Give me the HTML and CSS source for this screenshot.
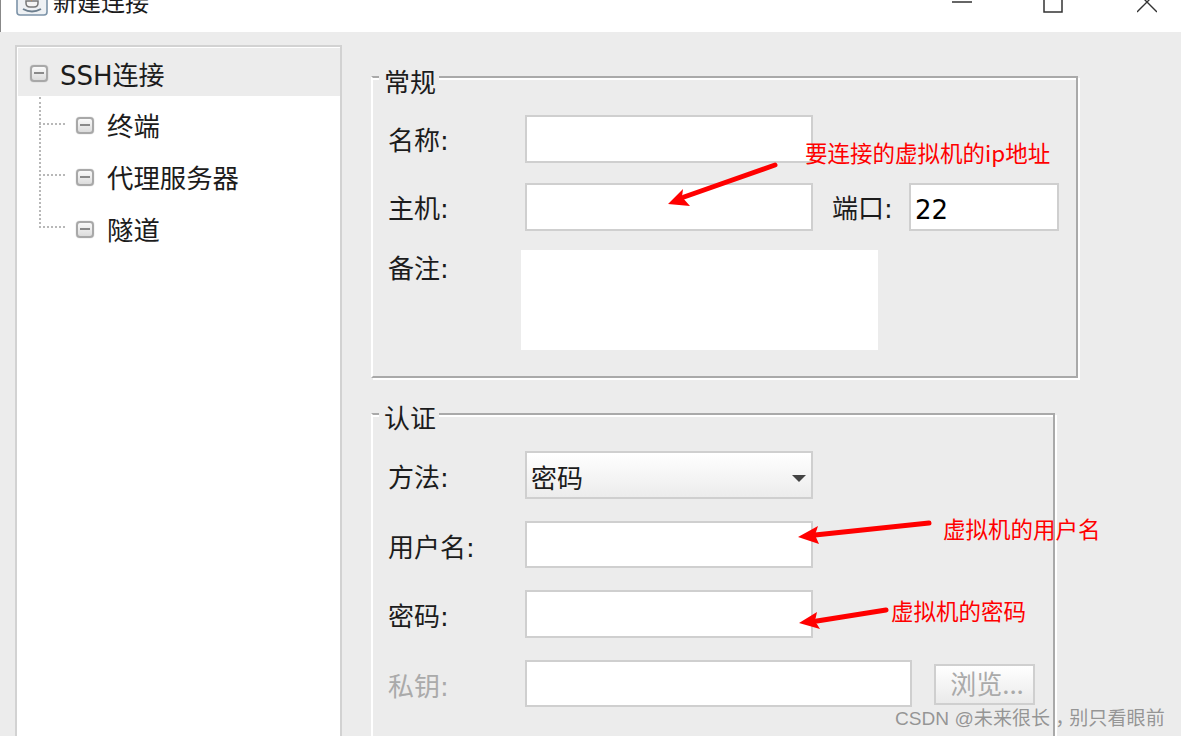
FILE: index.html
```html
<!DOCTYPE html>
<html lang="zh-CN">
<head>
<meta charset="utf-8">
<title>新建连接</title>
<link rel="stylesheet" href="styles.css">
</head>
<body>
<div class="window">
  <header class="titlebar">
    <div class="title-left">
      <svg class="app-icon" width="32" height="18" viewBox="0 0 32 18"><rect x="1" y="-14" width="30" height="29" rx="3" fill="#eef1f4" stroke="#7c93a8" stroke-width="1.6"/><path d="M10 1h12v2q0 4-4 4h-4q-4 0-4-4z" fill="#f4f4f4" stroke="#777" stroke-width="1.5"/><path d="M7 9q9 5 18 0" fill="none" stroke="#6d7f8e" stroke-width="2"/><path d="M15 -3q-2 1.500 1 3" stroke="#d9822b" stroke-width="1.500" fill="none"/></svg>
      <span class="title-text">新建连接</span>
    </div>
    <div class="controls">
      <svg width="20" height="14" viewBox="0 0 20 14"><path d="M0 2h20" stroke="#333" stroke-width="1.5"/></svg>
      <svg width="20" height="14" viewBox="0 0 20 14"><path d="M1 -8v20h18v-20" stroke="#333" stroke-width="1.5" fill="none"/></svg>
      <svg class="control-close" width="20" height="14" viewBox="0 0 20 14"><path d="M0 -8l20 20M20 -8l-20 20" stroke="#333" stroke-width="1.4" fill="none"/></svg>
    </div>
  </header>
  <main class="content">
    <nav class="tree">
      <div class="tree-root"><span class="toggle"></span><span>SSH连接</span></div>
      <ul class="tree-children">
        <li class="tree-item"><span class="connector"></span><span class="toggle"></span><span>终端</span></li>
        <li class="tree-item"><span class="connector"></span><span class="toggle"></span><span>代理服务器</span></li>
        <li class="tree-item"><span class="connector"></span><span class="toggle"></span><span>隧道</span></li>
      </ul>
    </nav>
    <div class="panels">
      <section class="group group-general">
        <div class="legend">常规</div>
        <div class="row row-tight"><label class="label">名称:</label><div class="field field-main"></div></div>
        <div class="row"><label class="label">主机:</label><div class="field field-main"></div><label class="label-port">端口:</label><div class="field field-port">22</div></div>
        <div class="row row-note"><label class="label">备注:</label><div class="note"></div></div>
      </section>
      <section class="group group-auth">
        <div class="legend">认证</div>
        <div class="row"><label class="label">方法:</label><div class="field field-main select">密码<span class="caret"></span></div></div>
        <div class="row"><label class="label">用户名:</label><div class="field field-main"></div></div>
        <div class="row"><label class="label">密码:</label><div class="field field-main"></div></div>
        <div class="row"><label class="label disabled">私钥:</label><div class="field field-key"></div><div class="browse">浏览...</div></div>
      </section>
    </div>
  </main>
  <svg class="arrows" width="1181" height="736" viewBox="0 0 1181 736">
    <path d="M775 165L684 197" stroke="#f00" stroke-width="5" stroke-linecap="round"/>
    <path d="M668 204L683 189L682 197L690 206Z" fill="#f00"/>
    <path d="M929 523L815 535" stroke="#f00" stroke-width="5" stroke-linecap="round"/>
    <path d="M798 537L818 526L815 535L819 544Z" fill="#f00"/>
    <path d="M886 610L817 621" stroke="#f00" stroke-width="5" stroke-linecap="round"/>
    <path d="M799 623L817 612L815 621L820 629Z" fill="#f00"/>
  </svg>
  <span class="note-text note-host">要连接的虚拟机的ip地址</span>
  <span class="note-text note-user">虚拟机的用户名</span>
  <span class="note-text note-pass">虚拟机的密码</span>
  <span class="watermark">CSDN @未来很长<span class="comma">，</span>别只看眼前</span>
</div>
</body>
</html>
```
FILE: styles.css
```css
html, body {
  margin: 0;
  padding: 0;
  height: 100%;
  overflow: hidden;
}
body {
  font-family: "DejaVu Sans", "Noto Sans CJK SC", sans-serif;
  font-size: 26px;
  color: #1c1c1c;
}
.window {
  position: relative;
  width: 1181px;
  height: 736px;
  overflow: hidden;
  background: #ececec;
}
.titlebar {
  height: 32px;
  background: #fff;
  border-left: 1px solid #888;
  display: flex;
  justify-content: space-between;
  align-items: flex-start;
  overflow: hidden;
}
.title-left {
  display: flex;
  align-items: flex-start;
  margin-left: 15px;
}
.title-text {
  font-size: 24px;
  line-height: 30px;
  margin-top: -12px;
  margin-left: 5px;
}
.controls {
  display: flex;
  gap: 71px;
  margin-right: 24px;
}
.control-close {
  margin-left: 3px;
}
.content {
  display: flex;
  align-items: flex-start;
  padding-left: 15px;
  padding-top: 13px;
}
.tree {
  flex: none;
  box-sizing: border-box;
  width: 327px;
  height: 720px;
  background: #fff;
  border: 2px solid #d2d2d2;
  padding: 1px 0 0 1px;
}
.tree-root {
  height: 48px;
  background: #ececec;
  display: flex;
  align-items: center;
  padding-left: 12px;
  padding-top: 2px;
  box-sizing: border-box;
}
.toggle {
  flex: none;
  box-sizing: border-box;
  position: relative;
  width: 18px;
  height: 17px;
  margin-right: 12px;
  border: 2px solid #a8a8a8;
  border-radius: 4px;
  background: linear-gradient(#fafafa, #dcdcdc);
  box-shadow: 0 0 1px #999;
}
.toggle::after {
  content: "";
  position: absolute;
  left: 2px;
  right: 2px;
  top: 5px;
  height: 2px;
  background: #8a8a8a;
}
.tree-children {
  list-style: none;
  margin: 0;
  padding: 4px 0 0 21px;
  position: relative;
  font-size: 26.4px;
}
.tree-children::before {
  content: "";
  position: absolute;
  left: 21px;
  top: 1px;
  bottom: 27px;
  border-left: 2px dotted #b8b8b8;
}
.tree-item {
  height: 51.67px;
  display: flex;
  align-items: center;
}
.tree-item .toggle {
  margin-right: 13px;
}
.tree-item span:last-child {
  position: relative;
  top: -1px;
}
.connector {
  flex: none;
  width: 26px;
  margin: -4px 11px 0 0;
  border-top: 2px dotted #b8b8b8;
}
.panels {
  margin-left: 29px;
  padding-top: 31px;
}
.group {
  box-sizing: border-box;
  border: 2px solid #a9a9a9;
  border-left-color: #fff;
  box-shadow: 2px 2px 0 #fff, inset 0 2px 0 #fff;
  padding-left: 15px;
}
.group-general {
  width: 707px;
  height: 302px;
}
.group-auth {
  width: 684px;
  height: 420px;
  margin-top: 35px;
}
.legend {
  width: fit-content;
  margin: -10px 0 17px -9px;
  padding: 0 3px 0 5px;
  height: 30px;
  line-height: 30px;
  background: #ececec;
}
.group-auth .legend {
  margin-top: -11px;
  margin-bottom: 17px;
}
.row {
  display: flex;
  align-items: center;
  margin-bottom: 22px;
}
.row-tight {
  margin-bottom: 20.5px;
}
.row-note {
  align-items: flex-start;
  margin-top: -2.5px;
}
.label {
  flex: none;
  width: 137px;
  position: relative;
  top: 1px;
}
.group-general .label {
  top: 0;
}
.row-note .label {
  width: 133px;
  top: -2px;
}
.disabled {
  color: #aaa;
}
.field {
  flex: none;
  box-sizing: border-box;
  height: 47.5px;
  background: #fff;
  border: 2px solid #cfcfcf;
  display: flex;
  align-items: center;
  padding: 4px 0 0 4px;
}
.field-main {
  width: 288px;
}
.label-port {
  margin-left: 19px;
  width: 77px;
  flex: none;
}
.field-port {
  width: 150px;
  color: #000;
  padding-top: 6px;
}
.field-key {
  width: 387px;
}
.note {
  flex: none;
  width: 357px;
  height: 100px;
  background: #fff;
}
.select {
  position: relative;
  background: linear-gradient(#fff, #ececec);
}
.caret {
  position: absolute;
  right: 5px;
  top: 22px;
  width: 0;
  height: 0;
  border-left: 7px solid transparent;
  border-right: 7px solid transparent;
  border-top: 7px solid #444;
}
.browse {
  flex: none;
  box-sizing: border-box;
  width: 101px;
  height: 41px;
  margin-left: 22px;
  margin-top: 3px;
  padding: 0 0 4px 5px;
  border: 2px solid #cfcfcf;
  background: linear-gradient(#fff, #eaeaea);
  color: #aaa;
  font-family: "Noto Sans CJK SC", sans-serif;
  display: flex;
  align-items: center;
  justify-content: center;
}
.arrows {
  position: absolute;
  left: 0;
  top: 0;
  pointer-events: none;
}
.note-text {
  position: absolute;
  color: #f00;
  font-family: "Noto Sans CJK SC", sans-serif;
  font-size: 22.5px;
  line-height: 30px;
  white-space: nowrap;
}
.note-host { left: 805px; top: 137px; }
.note-user { left: 943px; top: 513px; }
.note-pass { left: 891px; top: 595px; }
.watermark {
  position: absolute;
  left: 895px;
  top: 706px;
  font-family: "Liberation Sans", "Noto Sans CJK SC", sans-serif;
  font-size: 19.1px;
  line-height: 26px;
  color: rgba(120, 120, 120, 0.75);
  white-space: nowrap;
}
.comma {
  position: relative;
  left: 5px;
}
```
